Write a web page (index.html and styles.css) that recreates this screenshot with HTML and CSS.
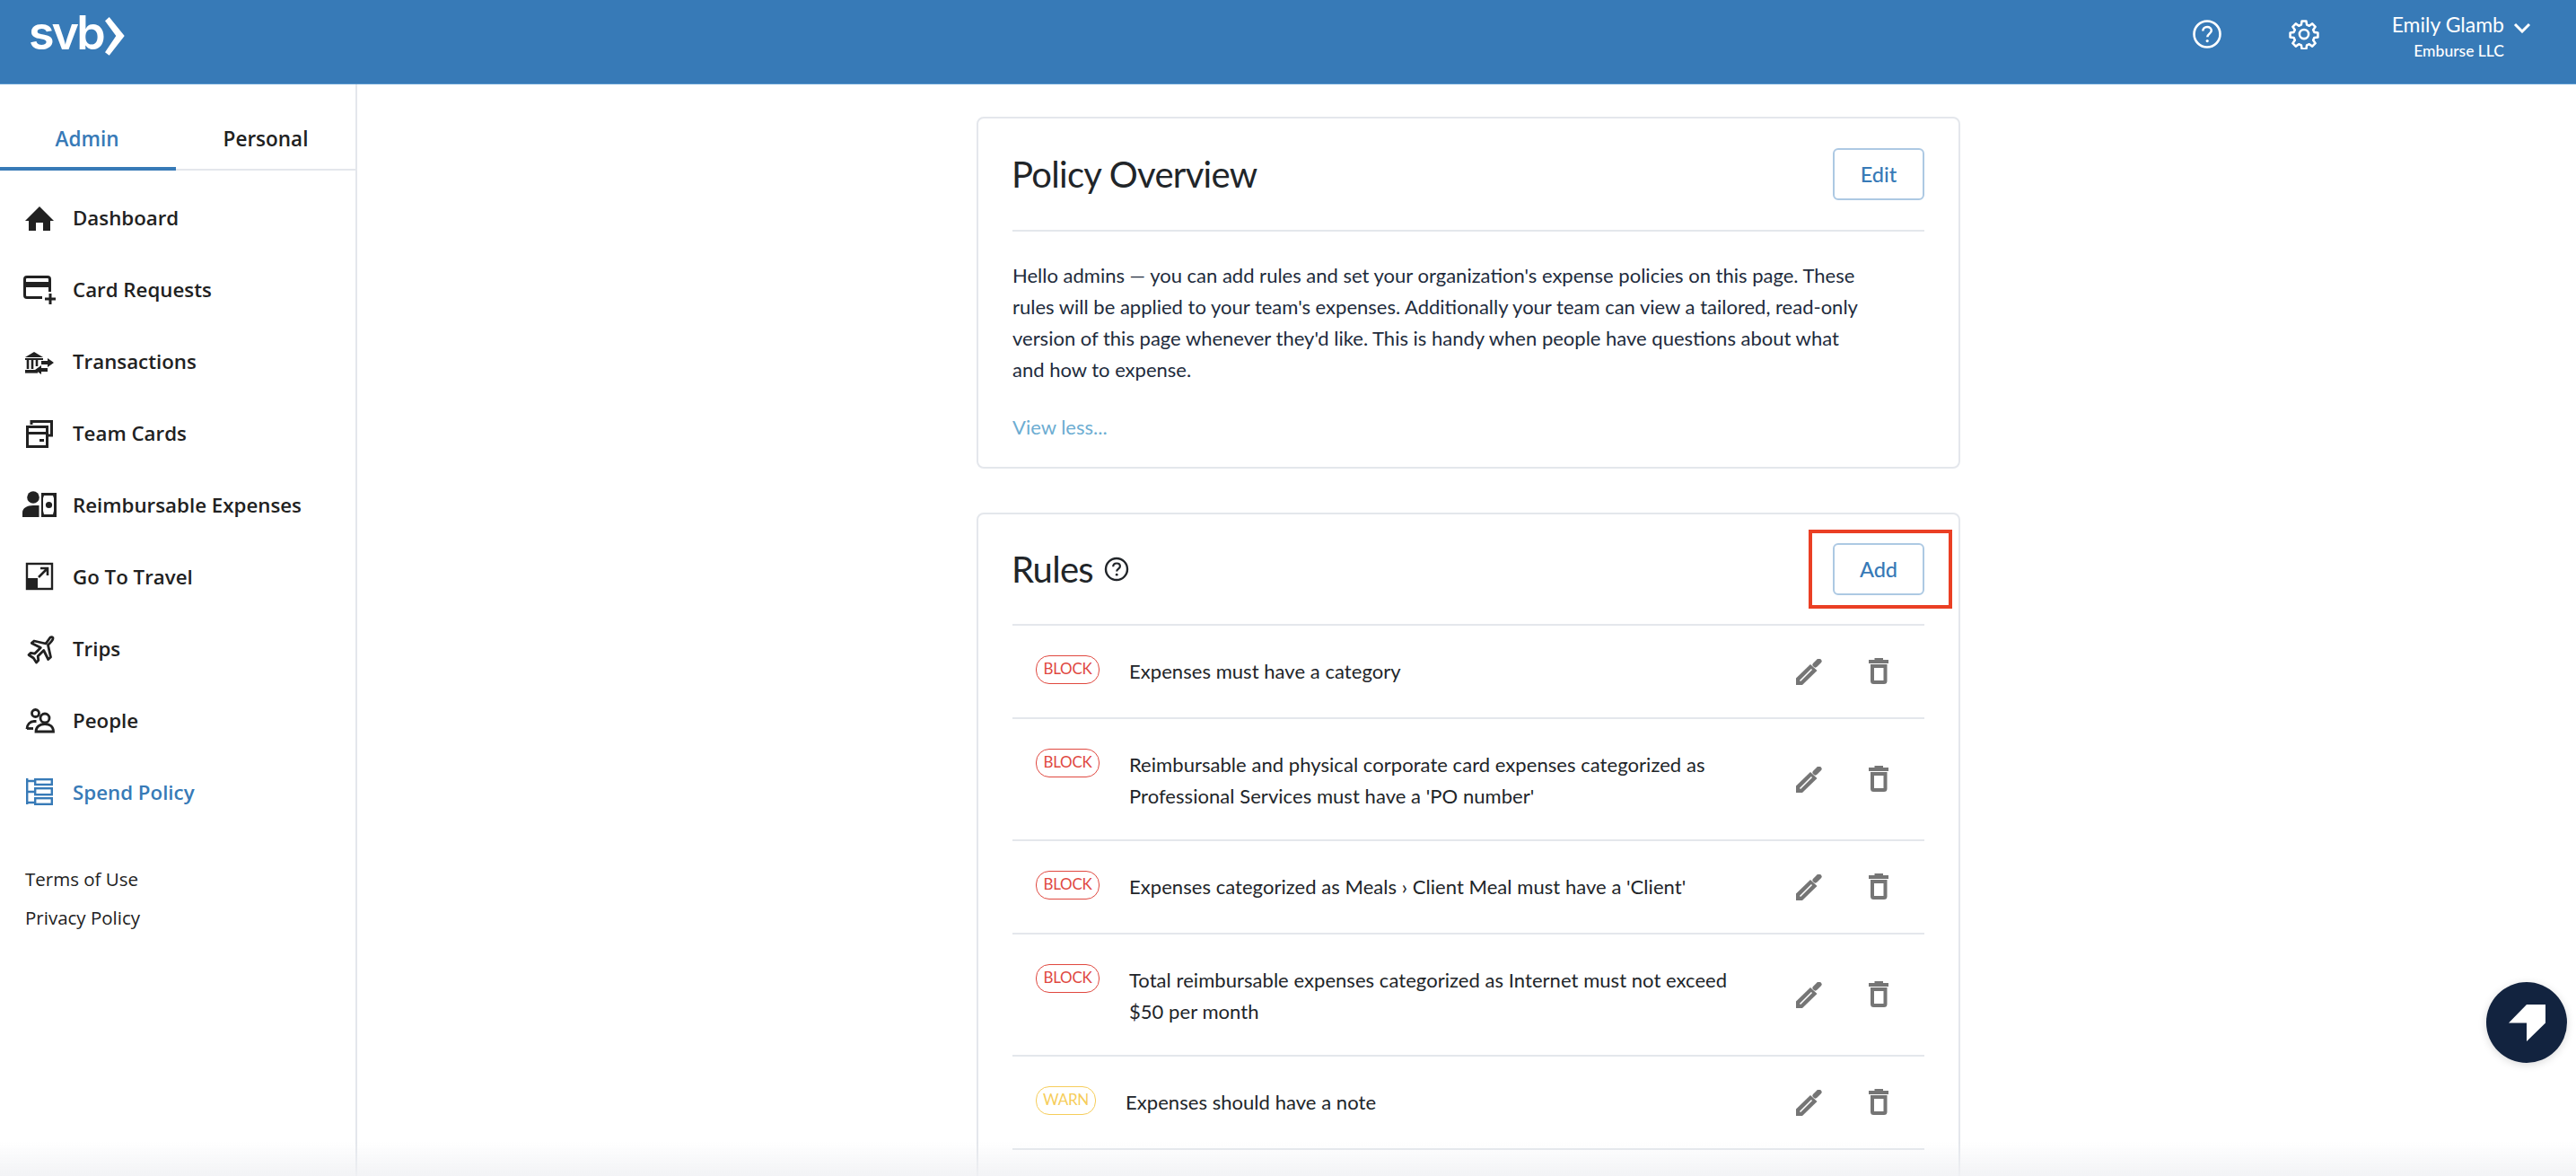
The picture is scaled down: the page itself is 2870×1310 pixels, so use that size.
FILE: index.html
```html
<!DOCTYPE html>
<html lang="en">
<head>
<meta charset="utf-8">
<title>Spend Policy</title>
<link rel="stylesheet" href="styles.css">
</head>
<body>
<header class="topbar">
  <a class="logo"><span class="logo-text">svb</span>
    <svg class="logo-mark" viewBox="0 0 22 43"><polygon fill="#fff" points="0,4.300 4.700,0 21.700,21 4.700,42.700 0,39.300 12.300,21"/></svg>
  </a>
  <div class="top-actions">
    <svg class="top-icon" viewBox="0 0 34 34"><circle cx="17" cy="17" r="14.500" fill="none" stroke="#fff" stroke-width="2.600"/><path d="M12.300 13.600c0-2.800 2.100-4.600 4.800-4.600s4.700 1.700 4.700 4.100c0 3.400-4.500 3.700-4.500 7.100" fill="none" stroke="#fff" stroke-width="2.500"/><circle cx="17.200" cy="24.600" r="1.600" fill="#fff"/></svg>
    <svg class="top-icon gear" viewBox="0 0 24 24"><path fill="none" stroke="#fff" stroke-width="1.800" stroke-linejoin="round" d="M10.300 1.800h3.400l.5 2.900 1.900.8 2.400-1.700 2.400 2.400-1.700 2.400.8 1.900 2.900.5v3.400l-2.900.5-.8 1.900 1.700 2.400-2.400 2.400-2.400-1.700-1.900.8-.5 2.900h-3.400l-.5-2.900-1.900-.8-2.400 1.700-2.400-2.400 1.700-2.400-.8-1.900-2.900-.5v-3.400l2.900-.5.8-1.900-1.700-2.400 2.400-2.400 2.400 1.700 1.900-.8z"/><circle cx="12" cy="12" r="3.600" fill="none" stroke="#fff" stroke-width="1.800"/></svg>
    <div class="user">
      <div class="user-name">Emily Glamb</div>
      <div class="user-org">Emburse LLC</div>
    </div>
    <svg class="user-caret" viewBox="0 0 20 12"><path d="M2 2l8 8 8-8" fill="none" stroke="#fff" stroke-width="3"/></svg>
  </div>
</header>

<div class="shell">
  <aside class="sidebar">
    <div class="tabs">
      <div class="tab tab-active">Admin</div>
      <div class="tab">Personal</div>
    </div>
    <nav class="nav">
      <a class="nav-item">
        <svg class="nav-icon" viewBox="0 0 38 38"><polygon fill="#212121" points="19,7 35,23 31,23 31,34 23,34 23,25 15,25 15,34 7,34 7,23 3,23"/></svg>
        <span>Dashboard</span>
      </a>
      <a class="nav-item">
        <svg class="nav-icon" viewBox="0 0 38 38"><rect x="2.500" y="5.500" width="28" height="23" rx="2.500" fill="none" stroke="#212121" stroke-width="3"/><rect x="2" y="11" width="29" height="6" fill="#212121"/><rect x="22" y="22" width="16" height="16" fill="#fff"/><path d="M31 24v12M25 30h12" stroke="#212121" stroke-width="3"/></svg>
        <span>Card Requests</span>
      </a>
      <a class="nav-item">
        <svg class="nav-icon" viewBox="0 0 38 38"><polygon fill="#212121" points="13,9 23,15 3,15"/><rect x="3" y="16" width="20" height="2" fill="#212121"/><path d="M6 18v10M11 18v10M16 18v7" stroke="#212121" stroke-width="2.600"/><rect x="3" y="29" width="14" height="3.600" fill="#212121"/><polygon fill="#212121" points="28,16 35,21 28,26 28,23 21,23 21,19 28,19"/><polygon fill="#212121" points="21,24 14,29 21,34 21,31 28,31 28,27 21,27"/></svg>
        <span>Transactions</span>
      </a>
      <a class="nav-item">
        <svg class="nav-icon" viewBox="0 0 38 38"><path d="M10 10V6.500h22.500V22H29" fill="none" stroke="#212121" stroke-width="3"/><rect x="5.500" y="12.500" width="22" height="22" fill="#fff" stroke="#212121" stroke-width="3"/><rect x="6" y="18" width="21" height="3" fill="#212121"/><rect x="19" y="26" width="5" height="3" fill="#212121"/></svg>
        <span>Team Cards</span>
      </a>
      <a class="nav-item">
        <svg class="nav-icon" viewBox="0 0 38 38"><circle cx="12" cy="11" r="6.800" fill="#212121"/><path d="M0 33v-5c0-5 5-8 12-8s6.500 0 6.500 0V33z" fill="#212121"/><rect x="21" y="6" width="17" height="27" fill="#212121"/><path d="M24 9h10l1 3v14l-1 4H24l-1-4V12z" fill="#fff"/><circle cx="29.500" cy="19.500" r="3.600" fill="#212121"/></svg>
        <span>Reimbursable Expenses</span>
      </a>
      <a class="nav-item">
        <svg class="nav-icon" viewBox="0 0 38 38"><rect x="5" y="5" width="28" height="28" fill="none" stroke="#212121" stroke-width="2.400"/><rect x="5" y="21" width="12" height="12" fill="#212121"/><path d="M18 20L28 10M20 10h8v8" fill="none" stroke="#212121" stroke-width="2.600"/></svg>
        <span>Go To Travel</span>
      </a>
      <a class="nav-item">
        <svg class="nav-icon" viewBox="0 0 38 38"><path d="M31 7c1.500-.8 3.500-.3 3 1.600-.3 1.500-2 3.600-5.500 7L31.500 29l-2.800 2.500-5-10-6.500 6.500.6 4.500L15.500 35l-3.200-5L7 26.500l2.300-2.200 4.500.8 6.500-6.500-10-5.200L13 11l13 3z" fill="none" stroke="#212121" stroke-width="2.800" stroke-linejoin="round"/></svg>
        <span>Trips</span>
      </a>
      <a class="nav-item">
        <svg class="nav-icon" viewBox="0 0 38 38"><circle cx="14.500" cy="11.500" r="4" fill="none" stroke="#212121" stroke-width="2.800"/><circle cx="25" cy="17" r="5" fill="none" stroke="#212121" stroke-width="2.800"/><path d="M5 29c0-5 3.500-8.500 8-8.500h2.500" fill="none" stroke="#212121" stroke-width="2.800"/><path d="M5 28.500h7" stroke="#212121" stroke-width="2.800"/><path d="M15 32c0-5 4-8.500 10-8.500s9.500 3.500 9.500 8.500z" fill="none" stroke="#212121" stroke-width="2.800"/></svg>
        <span>People</span>
      </a>
      <a class="nav-item nav-item-active">
        <svg class="nav-icon" viewBox="0 0 38 38"><path d="M5.200 7h9M5.200 19h9M5.200 31h9M5.200 4v29" fill="none" stroke="#377ab7" stroke-width="2.400"/><rect x="14.200" y="5.200" width="18.600" height="5.800" fill="none" stroke="#377ab7" stroke-width="2.400"/><rect x="14.200" y="15.200" width="18.600" height="7" fill="none" stroke="#377ab7" stroke-width="2.400"/><rect x="14.200" y="26.200" width="18.600" height="6.600" fill="none" stroke="#377ab7" stroke-width="2.400"/></svg>
        <span>Spend Policy</span>
      </a>
    </nav>
    <div class="legal">
      <a class="legal-link">Terms of Use</a>
      <a class="legal-link">Privacy Policy</a>
    </div>
  </aside>

  <main class="main">
    <section class="card card-overview">
      <div class="card-head card-head-tall">
        <h1 class="card-title">Policy Overview</h1>
        <button class="btn">Edit</button>
      </div>
      <p class="overview-text">Hello admins — you can add rules and set your organization's expense policies on this page. These rules will be applied to your team's expenses. Additionally your team can view a tailored, read-only version of this page whenever they'd like. This is handy when people have questions about what and how to expense.</p>
      <a class="view-less">View less...</a>
    </section>

    <section class="card card-rules">
      <div class="card-head">
        <h1 class="card-title">Rules
          <svg class="title-help" viewBox="0 0 28 28"><circle cx="14" cy="14" r="12" fill="none" stroke="#212529" stroke-width="2.400"/><path d="M10.200 11.200c0-2.300 1.700-3.700 3.900-3.700s3.800 1.400 3.800 3.300c0 2.800-3.700 3-3.700 5.800" fill="none" stroke="#212529" stroke-width="2.200"/><circle cx="14.200" cy="20.200" r="1.400" fill="#212529"/></svg>
        </h1>
        <div class="btn-wrap">
          <button class="btn">Add</button>
          <span class="highlight"></span>
        </div>
      </div>

      <div class="rule">
        <span class="badge badge-block">BLOCK</span>
        <div class="rule-text">Expenses must have a category</div>
        <div class="rule-actions">
          <svg class="act-pencil" viewBox="0 0 29 29"><polygon points="0,29 0,21.500 16,6 23.500,13 7,29" fill="#757575"/><path d="M4.500 24.500L17.500 11.500" stroke="#fff" stroke-width="1.600"/><path d="M21.500 6.500l4-4" stroke="#757575" stroke-width="6" stroke-linecap="round"/></svg>
          <svg class="act-trash" viewBox="0 0 22 30"><rect x="0" y="2" width="22" height="4" fill="#757575"/><rect x="6.500" y="0" width="9.500" height="2" fill="#757575"/><path d="M4 9h14.500V25.500a1.500 1.500 0 0 1-1.500 1.500H5.500A1.500 1.500 0 0 1 4 25.500z" fill="none" stroke="#757575" stroke-width="4"/></svg>
        </div>
      </div>
      <div class="rule">
        <span class="badge badge-block">BLOCK</span>
        <div class="rule-text">Reimbursable and physical corporate card expenses categorized as Professional Services must have a 'PO number'</div>
        <div class="rule-actions">
          <svg class="act-pencil" viewBox="0 0 29 29"><polygon points="0,29 0,21.500 16,6 23.500,13 7,29" fill="#757575"/><path d="M4.500 24.500L17.500 11.500" stroke="#fff" stroke-width="1.600"/><path d="M21.500 6.500l4-4" stroke="#757575" stroke-width="6" stroke-linecap="round"/></svg>
          <svg class="act-trash" viewBox="0 0 22 30"><rect x="0" y="2" width="22" height="4" fill="#757575"/><rect x="6.500" y="0" width="9.500" height="2" fill="#757575"/><path d="M4 9h14.500V25.500a1.500 1.500 0 0 1-1.500 1.500H5.500A1.500 1.500 0 0 1 4 25.500z" fill="none" stroke="#757575" stroke-width="4"/></svg>
        </div>
      </div>
      <div class="rule">
        <span class="badge badge-block">BLOCK</span>
        <div class="rule-text">Expenses categorized as Meals › Client Meal must have a 'Client'</div>
        <div class="rule-actions">
          <svg class="act-pencil" viewBox="0 0 29 29"><polygon points="0,29 0,21.500 16,6 23.500,13 7,29" fill="#757575"/><path d="M4.500 24.500L17.500 11.500" stroke="#fff" stroke-width="1.600"/><path d="M21.500 6.500l4-4" stroke="#757575" stroke-width="6" stroke-linecap="round"/></svg>
          <svg class="act-trash" viewBox="0 0 22 30"><rect x="0" y="2" width="22" height="4" fill="#757575"/><rect x="6.500" y="0" width="9.500" height="2" fill="#757575"/><path d="M4 9h14.500V25.500a1.500 1.500 0 0 1-1.500 1.500H5.500A1.500 1.500 0 0 1 4 25.500z" fill="none" stroke="#757575" stroke-width="4"/></svg>
        </div>
      </div>
      <div class="rule">
        <span class="badge badge-block">BLOCK</span>
        <div class="rule-text">Total reimbursable expenses categorized as Internet must not exceed $50 per month</div>
        <div class="rule-actions">
          <svg class="act-pencil" viewBox="0 0 29 29"><polygon points="0,29 0,21.500 16,6 23.500,13 7,29" fill="#757575"/><path d="M4.500 24.500L17.500 11.500" stroke="#fff" stroke-width="1.600"/><path d="M21.500 6.500l4-4" stroke="#757575" stroke-width="6" stroke-linecap="round"/></svg>
          <svg class="act-trash" viewBox="0 0 22 30"><rect x="0" y="2" width="22" height="4" fill="#757575"/><rect x="6.500" y="0" width="9.500" height="2" fill="#757575"/><path d="M4 9h14.500V25.500a1.500 1.500 0 0 1-1.500 1.500H5.500A1.500 1.500 0 0 1 4 25.500z" fill="none" stroke="#757575" stroke-width="4"/></svg>
        </div>
      </div>
      <div class="rule">
        <span class="badge badge-warn">WARN</span>
        <div class="rule-text">Expenses should have a note</div>
        <div class="rule-actions">
          <svg class="act-pencil" viewBox="0 0 29 29"><polygon points="0,29 0,21.500 16,6 23.500,13 7,29" fill="#757575"/><path d="M4.500 24.500L17.500 11.500" stroke="#fff" stroke-width="1.600"/><path d="M21.500 6.500l4-4" stroke="#757575" stroke-width="6" stroke-linecap="round"/></svg>
          <svg class="act-trash" viewBox="0 0 22 30"><rect x="0" y="2" width="22" height="4" fill="#757575"/><rect x="6.500" y="0" width="9.500" height="2" fill="#757575"/><path d="M4 9h14.500V25.500a1.500 1.500 0 0 1-1.500 1.500H5.500A1.500 1.500 0 0 1 4 25.500z" fill="none" stroke="#757575" stroke-width="4"/></svg>
        </div>
      </div>
    </section>
  </main>
</div>

<div class="bottom-fade"></div>
<button class="fab" aria-label="Assistant">
  <svg class="fab-icon" viewBox="0 0 41 41"><polygon fill="#fff" points="0,20.500 20,0 41,0 41,20.500 20,41 20,20.500"/></svg>
</button>
</body>
</html>
```

FILE: styles.css
```css
* { box-sizing: border-box; }
html, body { height: 100%; }
body {
  margin: 0;
  height: 100vh;
  overflow: hidden;
  display: flex;
  flex-direction: column;
  background: #fff;
  color: #212529;
  font-family: "Lato", sans-serif;
}
.topbar {
  flex: none;
  height: 94px;
  background: #377ab7;
  border-bottom: 1px solid #5b9ad0;
  display: flex;
  align-items: flex-start;
  justify-content: space-between;
}
.logo {
  display: flex;
  align-items: flex-start;
  margin-left: 32px;
  color: #fff;
}
.logo-text {
  font-family: "Inter", sans-serif;
  font-weight: 600;
  font-size: 52px;
  line-height: 74px;
  letter-spacing: -3px;
}
.logo-mark { width: 22px; height: 43px; margin-left: 2px; margin-top: 19px; }
.top-actions { display: flex; align-items: flex-start; margin-right: 50px; }
.top-icon { width: 34px; height: 34px; margin-top: 21px; }
.gear { margin-left: 74px; }
.user { margin-left: 81px; text-align: right; color: #fff; margin-top: 12px; }
.user-name { font-size: 23px; line-height: 30px; }
.user-org { font-size: 17.500px; line-height: 30px; font-weight: 500; }
.user-caret { width: 20px; height: 12px; margin-left: 10px; margin-top: 25px; }

.shell { flex: 1; display: flex; min-height: 0; }
.sidebar {
  flex: none;
  width: 398px;
  border-right: 2px solid #e4e7ec;
  font-family: "Open Sans", sans-serif;
}
.tabs { display: flex; height: 96px; border-bottom: 2px solid #e4e7ec; }
.tab {
  width: 196px;
  text-align: center;
  font-size: 22.500px;
  font-weight: 600;
  line-height: 122px;
  height: 96px;
  color: #212121;
}
.tab + .tab { width: 200px; }
.tab-active { color: #377ab7; border-bottom: 4px solid #377ab7; padding-right: 2px; }
.nav { padding-top: 12px; }
.nav-item {
  display: flex;
  align-items: center;
  height: 80px;
  padding-left: 25px;
  gap: 18px;
  font-size: 22.300px;
  font-weight: 600;
  color: #212121;
}
.nav-item-active { color: #377ab7; }
.nav-icon { flex: none; width: 38px; height: 38px; }
.legal { margin-top: 36px; padding-left: 28px; display: flex; flex-direction: column; }
.legal-link { font-size: 20.500px; line-height: 42.500px; color: #212121; }

.main { flex: 1; display: flex; flex-direction: column; align-items: center; padding-top: 36px; padding-left: 4px; gap: 49px; }
.card {
  flex: none;
  width: 1096px;
  border: 2px solid #e4e7ec;
  border-radius: 8px;
  padding: 0 38px;
  background: #fff;
}
.card-overview { height: 392px; }
.card-rules { padding-bottom: 80px; }
.card-head {
  display: flex;
  align-items: center;
  justify-content: space-between;
  height: 124px;
  border-bottom: 2px solid #e4e7ec;
}
.card-head-tall { height: 126px; }
.card-title {
  margin: 0 0 0 -1px;
  font-size: 40px;
  font-weight: 400;
  letter-spacing: -0.700px;
  display: flex;
  align-items: center;
  gap: 12px;
  color: #212529;
}
.title-help { width: 28px; height: 28px; }
.btn {
  width: 102px;
  height: 58px;
  border: 2px solid #adc9e3;
  border-radius: 6px;
  background: #fff;
  color: #377ab7;
  font-family: "Lato", sans-serif;
  font-size: 23.500px;
  font-weight: 500;
}
.btn-wrap { position: relative; display: flex; }
.highlight {
  position: absolute;
  left: -27px;
  top: -15px;
  width: 160px;
  height: 88px;
  border: 4px solid #ea3f24;
}
.overview-text {
  margin: 31px 0 0;
  max-width: 955px;
  font-size: 22px;
  line-height: 35px;
  color: #212b3c;
}
.view-less {
  display: block;
  margin-top: 29px;
  font-size: 22px;
  line-height: 35px;
  color: #6dadd2;
}
.rule {
  display: flex;
  align-items: flex-start;
  min-height: 104px;
  padding: 33px 0 31px 26px;
  border-bottom: 2px solid #e4e7ec;
  font-size: 22px;
  line-height: 35px;
  letter-spacing: 0.050px;
  color: #212529;
}
.badge {
  flex: none;
  height: 32px;
  width: 71px;
  border: 1.500px solid;
  border-radius: 15px;
  text-align: center;
  font-size: 17px;
  line-height: 27px;
  letter-spacing: -0.300px;
}
.badge-block { color: #e0483f; border-color: #e0483f; }
.badge-warn { color: #f6cd5a; border-color: #f6cd5a; width: 67px; }
.rule-text { flex: 1; margin-left: 33px; max-width: 670px; }
.rule-actions {
  margin-left: auto;
  display: flex;
  align-items: center;
  gap: 52px;
  padding-right: 40px;
  align-self: center;
  margin-top: -2px;
}
.act-pencil { width: 29px; height: 29px; }
.act-trash { width: 22px; height: 30px; }

.bottom-fade {
  position: fixed;
  left: 0;
  right: 0;
  bottom: 0;
  height: 38px;
  background: linear-gradient(to bottom, rgba(240,241,244,0), rgba(240,241,244,.85));
  pointer-events: none;
}
.fab {
  position: fixed;
  left: 2770px;
  top: 1094px;
  width: 90px;
  height: 90px;
  padding: 0;
  border: 0;
  border-radius: 50%;
  background: #12233f;
  box-shadow: 0 2px 10px rgba(0,0,0,.15);
  display: flex;
  align-items: center;
  justify-content: center;
}
.fab-icon { width: 41px; height: 41px; }
```
